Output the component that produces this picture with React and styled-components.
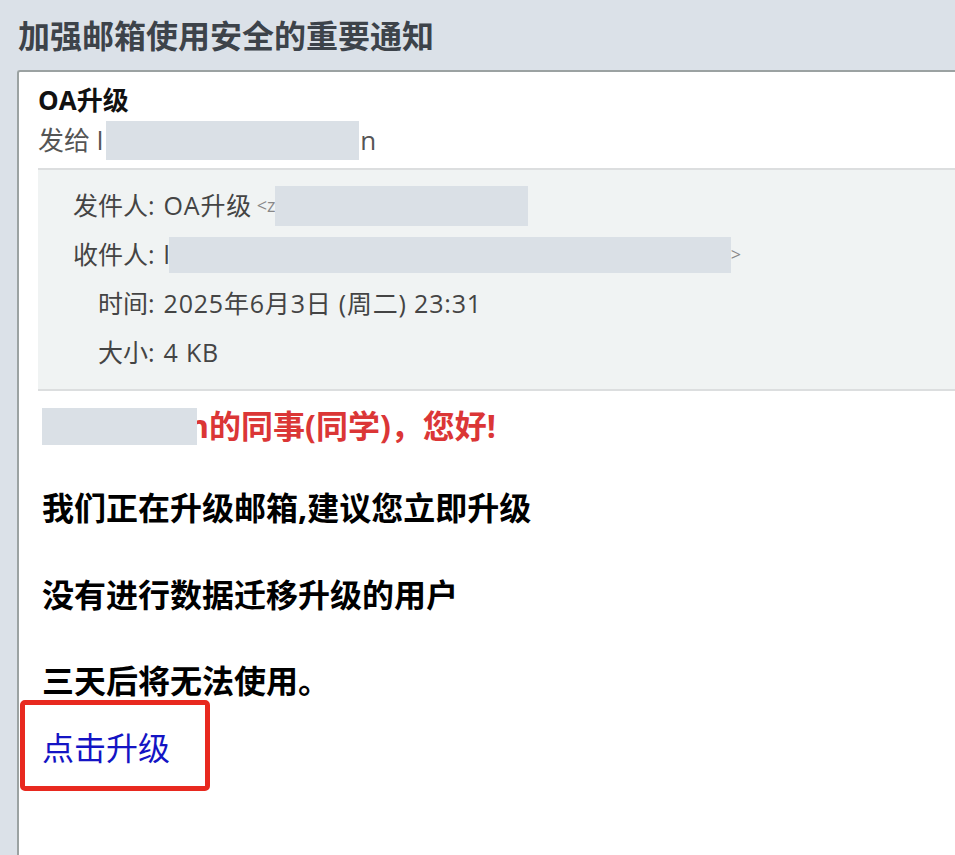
import styled, { createGlobalStyle } from "styled-components";

const GlobalStyle = createGlobalStyle`
  html, body {
    margin: 0;
    padding: 0;
    background: #dbe1e8;
    overflow: hidden;
  }
  body {
    font-family: "Open Sans", "Noto Sans CJK SC", sans-serif;
  }
`;

const Page = styled.div`
  min-height: 855px;
  display: flex;
  flex-direction: column;
`;

const Title = styled.h1`
  margin: 0;
  padding: 16px 0 0 18px;
  height: 54px;
  font-size: 32px;
  line-height: 40px;
  font-weight: 700;
  color: #3d434a;
`;

const Card = styled.div`
  flex: 1;
  margin-left: 17px;
  background: #fff;
  border-top: 2px solid #9ba2a2;
  border-left: 2px solid #9ba2a2;
  border-top-left-radius: 3px;
  padding-left: 19px;
`;

const Subject = styled.div`
  margin-top: 12px;
  font-size: 26px;
  line-height: 32px;
  font-weight: 700;
  color: #111;
`;

const SentTo = styled.div`
  margin-top: 4px;
  font-size: 26px;
  line-height: 40px;
  color: #555;
  display: flex;
  align-items: center;
`;

const Redact = styled.span`
  display: inline-block;
  background: #dae0e6;
  width: ${({ $w }) => $w}px;
  height: ${({ $h }) => $h || 39}px;
  margin-left: ${({ $ml }) => $ml || 0}px;
  margin-right: ${({ $mr }) => $mr || 0}px;
  position: relative;
  z-index: 1;
  flex-shrink: 0;
`;

const MetaBox = styled.div`
  margin-top: 8px;
  background: #f0f3f3;
  border-top: 2px solid #dcdedf;
  border-bottom: 2px solid #dcdedf;
  padding: 11px 0 12px 35px;
  display: grid;
  grid-template-columns: auto 1fr;
  column-gap: 9px;
  font-size: 25px;
  color: #444;
`;

const MetaLabel = styled.div`
  justify-self: end;
  line-height: 49px;
`;

const MetaValue = styled.div`
  line-height: 49px;
  display: flex;
  align-items: center;
  white-space: nowrap;
  letter-spacing: 0.8px;
`;

const Faint = styled.span`
  color: #888;
  font-size: 18px;
  letter-spacing: 0;
`;

const Body = styled.div`
  padding-left: 4px;
  display: flex;
  flex-direction: column;
  align-items: flex-start;
`;

const Greeting = styled.p`
  margin: 15px 0 0;
  font-size: 32px;
  line-height: 40px;
  font-weight: 700;
  color: #db3636;
  display: flex;
  align-items: center;
`;

const Line = styled.p`
  margin: ${({ $gap }) => $gap}px 0 0;
  font-size: 32px;
  line-height: 40px;
  font-weight: 700;
  color: #000;
`;

const LinkFrame = styled.div`
  margin: -1px 0 0 -22px;
  width: 190px;
  height: 91px;
  box-sizing: border-box;
  border: 5px solid #e8291f;
  border-radius: 5px;
  display: flex;
  align-items: center;
  padding-left: 17px;
`;

const UpgradeLink = styled.a`
  font-size: 32px;
  color: #1414c4;
  text-decoration: none;
  cursor: pointer;
`;

export default function App() {
  return (
    <>
      <GlobalStyle />
      <Page>
        <Title>加强邮箱使用安全的重要通知</Title>
        <Card>
          <Subject>OA升级</Subject>
          <SentTo>
            发给 l<Redact $w={253} $ml={3} $mr={1} />n
          </SentTo>
          <MetaBox>
            <MetaLabel>发件人:</MetaLabel>
            <MetaValue>
              OA升级<Faint>&nbsp;&lt;z</Faint>
              <Redact $w={253} $h={40} $ml={0} />
            </MetaValue>
            <MetaLabel>收件人:</MetaLabel>
            <MetaValue>
              l<Redact $w={562} $h={36} $ml={-2} />
              <Faint>&gt;</Faint>
            </MetaValue>
            <MetaLabel>时间:</MetaLabel>
            <MetaValue>2025年6月3日 (周二) 23:31</MetaValue>
            <MetaLabel>大小:</MetaLabel>
            <MetaValue>4 KB</MetaValue>
          </MetaBox>
          <Body>
            <Greeting>
              <Redact $w={155} $h={37} $mr={-9} />
              n的同事(同学)，您好!
            </Greeting>
            <Line $gap={42}>我们正在升级邮箱,建议您立即升级</Line>
            <Line $gap={47}>没有进行数据迁移升级的用户</Line>
            <Line $gap={46}>三天后将无法使用。</Line>
            <LinkFrame>
              <UpgradeLink>点击升级</UpgradeLink>
            </LinkFrame>
          </Body>
        </Card>
      </Page>
    </>
  );
}
